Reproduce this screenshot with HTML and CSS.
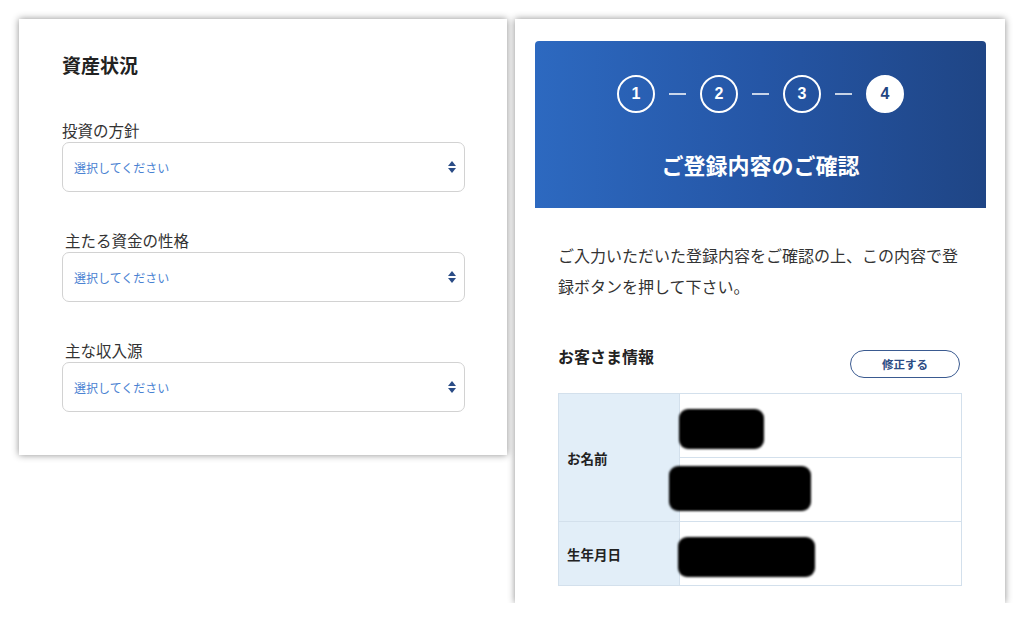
FILE: index.html
```html
<!DOCTYPE html>
<html lang="ja">
<head>
  <meta charset="UTF-8">
  <title>資産状況 / ご登録内容のご確認</title>
  <link rel="stylesheet" href="styles.css">
</head>
<body>

  <!-- 資産状況 -->
  <div class="tarjeta tarjeta-izq">
    <h2 class="titulo">資産状況</h2>

    <div class="campo">
      <label class="etiqueta">投資の方針</label>
      <div class="selector">
        <span class="placeholder">選択してください</span>
        <span class="flechas"></span>
      </div>
    </div>

    <div class="campo">
      <label class="etiqueta sangria">主たる資金の性格</label>
      <div class="selector">
        <span class="placeholder">選択してください</span>
        <span class="flechas"></span>
      </div>
    </div>

    <div class="campo">
      <label class="etiqueta sangria">主な収入源</label>
      <div class="selector">
        <span class="placeholder">選択してください</span>
        <span class="flechas"></span>
      </div>
    </div>
  </div>

  <!-- ご登録内容のご確認 -->
  <div class="tarjeta tarjeta-der">
    <div class="cabecera">
      <div class="pasos">
        <span class="paso">1</span>
        <span class="guion"></span>
        <span class="paso">2</span>
        <span class="guion"></span>
        <span class="paso">3</span>
        <span class="guion"></span>
        <span class="paso activo">4</span>
      </div>
      <h1 class="cabecera-titulo">ご登録内容のご確認</h1>
    </div>

    <div class="cuerpo">
      <p class="texto">ご入力いただいた登録内容をご確認の上、この内容で登録ボタンを押して下さい。</p>

      <div class="seccion">
        <h3 class="seccion-titulo">お客さま情報</h3>
        <button class="boton">修正する</button>
      </div>

      <table class="tabla">
        <tr>
          <th rowspan="2">お名前</th>
          <td><span class="tachado t1"></span></td>
        </tr>
        <tr>
          <td><span class="tachado t2"></span></td>
        </tr>
        <tr>
          <th>生年月日</th>
          <td><span class="tachado t3"></span></td>
        </tr>
      </table>
    </div>
  </div>

</body>
</html>
```

FILE: styles.css
```css
body {
  margin: 0;
  padding: 19px 0 0 19px;
  font-family: "Noto Sans CJK JP", "Noto Sans", sans-serif;
  background: #ffffff;
  display: flex;
  align-items: flex-start;
  gap: 8px;
  color: #333;
}

.tarjeta {
  background: #fff;
  box-shadow: 0 0 7px rgba(0, 0, 0, 0.45);
  box-sizing: border-box;
}

/* ---- tarjeta izquierda ---- */
.tarjeta-izq {
  width: 488px;
  height: 436px;
  padding: 34px 42px 0 43px;
}

.titulo {
  margin: 0 0 43px;
  font-size: 19px;
  line-height: 24px;
  font-weight: bold;
  color: #222;
}

.campo {
  margin-bottom: 38px;
}

.etiqueta {
  display: block;
  font-size: 15.5px;
  line-height: 20px;
  color: #333;
}

.etiqueta.sangria {
  padding-left: 3px;
}

.selector {
  margin-top: 2px;
  height: 50px;
  border: 1px solid #d2d2d2;
  border-radius: 7px;
  box-sizing: border-box;
  display: flex;
  align-items: center;
  justify-content: space-between;
  padding: 0 8px 0 11px;
}

.placeholder {
  font-size: 12px;
  color: #4a82d2;
}

.flechas {
  width: 0;
  height: 12px;
  position: relative;
  margin-right: 4px;
}

.flechas::before,
.flechas::after {
  content: "";
  position: absolute;
  left: -4px;
  border-left: 4px solid transparent;
  border-right: 4px solid transparent;
}

.flechas::before {
  top: 0;
  border-bottom: 5px solid #2a4c86;
}

.flechas::after {
  bottom: 0;
  border-top: 5px solid #2a4c86;
}

/* ---- tarjeta derecha ---- */
.tarjeta-der {
  width: 490px;
  height: 584px;
  padding: 22px 19px 0 20px;
}

.cabecera {
  height: 167px;
  box-sizing: border-box;
  padding-top: 34px;
  border-radius: 4px 4px 0 0;
  background: linear-gradient(90deg, #2d69c0 0%, #2556a6 50%, #1f4585 100%);
  text-align: center;
  color: #fff;
}

.pasos {
  display: flex;
  justify-content: center;
  align-items: center;
  gap: 14px;
}

.paso {
  width: 38px;
  height: 38px;
  box-sizing: border-box;
  border: 2px solid #fff;
  border-radius: 50%;
  display: flex;
  align-items: center;
  justify-content: center;
  font-family: "Liberation Sans", Arial, sans-serif;
  font-weight: bold;
  font-size: 16px;
  color: #fff;
}

.paso.activo {
  background: #fff;
  color: #1f4583;
}

.guion {
  width: 17px;
  height: 1.5px;
  background: rgba(255, 255, 255, 0.75);
}

.cabecera-titulo {
  margin: 36px 0 0;
  font-size: 22px;
  line-height: 30px;
  font-weight: bold;
  color: #fff;
}

.cuerpo {
  padding: 0 24px 0 23px;
}

.texto {
  margin: 32px 0 0;
  font-size: 16px;
  line-height: 31px;
  color: #333;
}

.seccion {
  margin-top: 46px;
  display: flex;
  justify-content: space-between;
  align-items: flex-start;
}

.seccion-titulo {
  margin: 0;
  font-size: 16px;
  line-height: 16px;
  font-weight: bold;
  color: #222;
}

.boton {
  margin: 2px 2px 0 0;
  width: 110px;
  height: 28px;
  border: 1.5px solid #3a5a90;
  border-radius: 14px;
  background: #fff;
  color: #2c4c84;
  font-family: "Noto Sans CJK JP", sans-serif;
  font-size: 11.5px;
  font-weight: bold;
  padding: 0;
}

.tabla {
  margin-top: 15px;
  width: 100%;
  border-collapse: collapse;
}

.tabla th,
.tabla td {
  border: 1px solid #d3e0ec;
  height: 63px;
  padding: 0;
}

.tabla th {
  width: 112px;
  background: #e2eef8;
  text-align: left;
  padding-left: 8px;
  font-size: 13.5px;
  font-weight: bold;
  color: #222;
}

.tabla td {
  vertical-align: top;
  background: #fff;
}

.tachado {
  display: block;
  background: #000;
  border-radius: 9px;
  filter: blur(1.2px);
}

.t1 {
  width: 85px;
  height: 40px;
  margin: 15px 0 0 -1px;
}

.t2 {
  width: 142px;
  height: 45px;
  margin: 8px 0 0 -11px;
}

.t3 {
  width: 137px;
  height: 40px;
  margin: 15px 0 0 -2px;
}
```
